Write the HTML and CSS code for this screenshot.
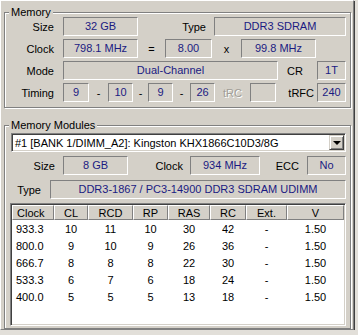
FILE: index.html
```html
<!DOCTYPE html>
<html lang="en">

<head>
    <meta charset="UTF-8">
    <title>Memory</title>
    <link rel="stylesheet" href="styles.css">
</head>

<body>
    <div class="tab-page">
        <div class="group">
            <div class="group-title">Memory</div>
            <div class="row">
                <span class="label lbl-main">Size</span>
                <span class="field w75">32 GB</span>
                <span class="label lbl-type">Type</span>
                <span class="field w132">DDR3 SDRAM</span>
            </div>
            <div class="row">
                <span class="label lbl-main">Clock</span>
                <span class="field w75">798.1 MHz</span>
                <span class="sep w27">=</span>
                <span class="field w47">8.00</span>
                <span class="sep w29">x</span>
                <span class="field w75">99.8 MHz</span>
            </div>
            <div class="row">
                <span class="label lbl-main">Mode</span>
                <span class="field w215">Dual-Channel</span>
                <span class="label lbl-cr">CR</span>
                <span class="field w29">1T</span>
            </div>
            <div class="row">
                <span class="label lbl-main">Timing</span>
                <span class="field w26">9</span>
                <span class="sep w19">-</span>
                <span class="field w25">10</span>
                <span class="sep w15">-</span>
                <span class="field w25">9</span>
                <span class="sep w17">-</span>
                <span class="field w25">26</span>
                <span class="label lbl-trc disabled">tRC</span>
                <span class="field w26"></span>
                <span class="label lbl-trfc">tRFC</span>
                <span class="field w29">240</span>
            </div>
        </div>

        <div class="group group-modules">
            <div class="group-title">Memory Modules</div>
            <div class="select">
                <span class="select-text">#1 [BANK 1/DIMM_A2]: Kingston KHX1866C10D3/8G</span>
                <span class="select-btn"><span class="arrow"></span></span>
            </div>
            <div class="row row-size">
                <span class="label lbl-msize">Size</span>
                <span class="field w65">8 GB</span>
                <span class="label lbl-mclock">Clock</span>
                <span class="field w70">934 MHz</span>
                <span class="label lbl-ecc">ECC</span>
                <span class="field w39">No</span>
            </div>
            <div class="row row-type">
                <span class="label lbl-mtype">Type</span>
                <span class="field w296">DDR3-1867 / PC3-14900 DDR3 SDRAM UDIMM</span>
            </div>
            <div class="listview">
                <div class="lv-grid" id="timings"></div>
            </div>
        </div>
    </div>

    <script>
        // timings table
        const headers = ['Clock', 'CL', 'RCD', 'RP', 'RAS', 'RC', 'Ext.', 'V'];
        const rows = [
            ['933.3', '10', '11', '10', '30', '42', '-', '1.50'],
            ['800.0', '9', '10', '9', '26', '36', '-', '1.50'],
            ['666.7', '8', '8', '8', '22', '30', '-', '1.50'],
            ['533.3', '6', '7', '6', '18', '24', '-', '1.50'],
            ['400.0', '5', '5', '5', '13', '18', '-', '1.50'],
        ];

        const grid = document.getElementById('timings');
        let html = '';
        headers.forEach((h, i) => {
            html += `<div class="lv-head${i === 0 ? ' left' : ''}">${h}</div>`;
        });
        rows.forEach(row => {
            row.forEach((cell, i) => {
                html += `<div class="lv-cell${i === 0 ? ' left' : ''}">${cell}</div>`;
            });
        });
        grid.innerHTML = html;
    </script>
</body>

</html>
```

FILE: styles.css
```css
body {
    margin: 0;
    background-color: #e2dfd9;
    font-family: "Liberation Sans", Arial, sans-serif;
    font-size: 11px;
    color: #000;
}

.tab-page {
    width: 352px;
    height: 328px;
    background-color: #d4d0c8;
    border-top: 1px solid #fff;
    border-left: 1px solid #fff;
    border-right: 1px solid #808080;
    border-bottom: 1px solid #808080;
    box-shadow: 1px 1px 0 #404040;
    overflow: hidden;
}

.group {
    display: flex;
    flex-direction: column;
    margin: 11px 0 0 3px;
    width: 345px;
    padding-bottom: 2px;
    border: 1px solid #808080;
    box-shadow: inset 1px 1px 0 #fff, 1px 1px 0 #fff;
}

.group-title {
    align-self: flex-start;
    height: 13px;
    line-height: 13px;
    margin: -7px 0 -2px 4px;
    padding: 0 2px;
    background-color: #d4d0c8;
}

.group-modules {
    margin-top: 17px;
    height: 200px;
}

.group-modules .group-title {
    margin-bottom: 1px;
}

.row {
    display: flex;
    align-items: center;
    height: 19px;
    margin-bottom: 3px;
}

.label {
    flex-shrink: 0;
    text-align: right;
}

.label.disabled {
    color: #a09d97;
    text-shadow: 1px 1px 0 #fff;
}

.lbl-main { width: 49px; margin-right: 9px; }
.lbl-type { width: 68px; margin-right: 8px; }
.lbl-cr { width: 25px; margin-right: 14px; }
.lbl-trc { width: 35px; text-align: center; }
.lbl-trfc { width: 38px; margin-right: 3px; }

.sep {
    flex-shrink: 0;
    text-align: center;
}

.field {
    flex-shrink: 0;
    box-sizing: border-box;
    height: 19px;
    line-height: 17px;
    border: 1px solid;
    border-color: #808080 #fff #fff #808080;
    color: #1a1a82;
    text-align: center;
    white-space: nowrap;
    overflow: hidden;
}

.w15 { width: 15px; }
.w17 { width: 17px; }
.w19 { width: 19px; }
.w25 { width: 25px; }
.w26 { width: 26px; }
.w27 { width: 27px; }
.w29 { width: 29px; }
.w39 { width: 39px; }
.w47 { width: 47px; }
.w65 { width: 65px; }
.w70 { width: 70px; }
.w75 { width: 75px; }
.w132 { width: 132px; }
.w215 { width: 215px; }
.w296 { width: 296px; }

.select {
    display: flex;
    align-items: center;
    box-sizing: border-box;
    width: 335px;
    height: 19px;
    margin: 0 0 4px 6px;
    padding: 2px;
    background-color: #fff;
    border: 1px solid;
    border-color: #808080 #fff #fff #808080;
    box-shadow: inset 1px 1px 0 #404040, inset -1px -1px 0 #d4d0c8;
}

.select-text {
    flex: 1;
    padding-left: 1px;
    white-space: nowrap;
}

.select-btn {
    display: flex;
    align-items: center;
    justify-content: center;
    box-sizing: border-box;
    width: 15px;
    height: 15px;
    margin-right: -1px;
    background-color: #d4d0c8;
    border: 1px solid;
    border-color: #d4d0c8 #404040 #404040 #d4d0c8;
    box-shadow: inset 1px 1px 0 #fff, inset -1px -1px 0 #808080;
}

.arrow {
    width: 0;
    height: 0;
    border-left: 4px solid transparent;
    border-right: 4px solid transparent;
    border-top: 4px solid #000;
}

.row-size { margin-bottom: 5px; }
.row-type { margin-bottom: 4px; }

.lbl-msize { width: 50px; margin-right: 8px; }
.lbl-mclock { width: 55px; margin-right: 7px; }
.lbl-ecc { width: 39px; margin-right: 8px; }
.lbl-mtype { width: 36px; margin-right: 9px; }

.listview {
    box-sizing: border-box;
    width: 336px;
    height: 125px;
    margin-left: 5px;
    background-color: #fff;
    border: 1px solid;
    border-color: #808080 #fff #fff #808080;
    box-shadow: inset 1px 1px 0 #404040, inset -1px -1px 0 #d4d0c8;
    padding: 1px;
}

.lv-grid {
    display: grid;
    grid-template-columns: 42px 34px 45px 35px 42px 36px 41px 57px;
    grid-auto-rows: 17px;
    grid-template-rows: 16px;
}

.lv-head {
    box-sizing: border-box;
    line-height: 14px;
    text-align: center;
    background-color: #d4d0c8;
    border-top: 1px solid #fff;
    border-left: 1px solid #fff;
    border-right: 1px solid #808080;
    border-bottom: 1px solid #808080;
    margin-bottom: 1px;
}

.lv-cell {
    line-height: 17px;
    text-align: center;
}

.lv-head.left,
.lv-cell.left {
    text-align: left;
    padding-left: 4px;
}
```
